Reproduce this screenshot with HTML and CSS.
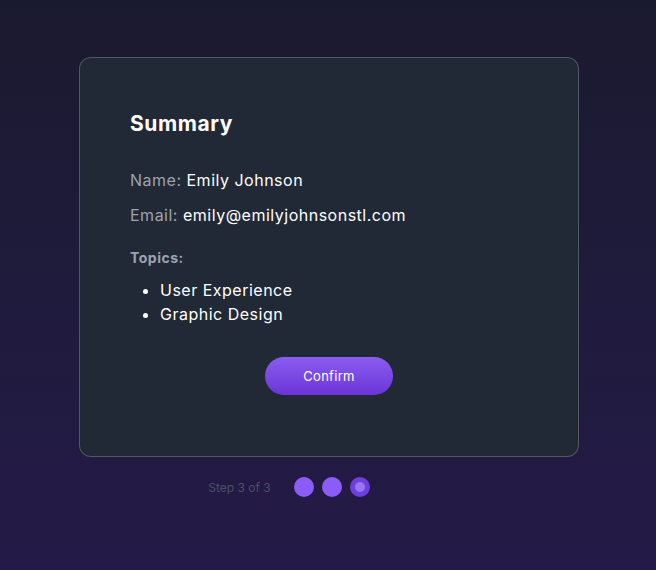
FILE: index.html
```html
<!DOCTYPE html>
<html lang="en">
<head>
<meta charset="utf-8">
<title>Summary</title>
<link rel="stylesheet" href="styles.css">
</head>
<body>
<main class="wrap">
  <section class="card">
    <h2 class="title">Summary</h2>
    <p class="field"><span class="label">Name:</span> Emily Johnson</p>
    <p class="field"><span class="label">Email:</span> emily@emilyjohnsonstl.com</p>
    <h3 class="topics-label">Topics:</h3>
    <ul class="topics">
      <li>User Experience</li>
      <li>Graphic Design</li>
    </ul>
    <div class="actions">
      <button class="confirm" type="button">Confirm</button>
    </div>
  </section>
  <div class="stepper">
    <span class="step-text">Step 3 of 3</span>
    <div class="dots">
      <span class="dot"></span>
      <span class="dot"></span>
      <span class="dot dot-active"></span>
    </div>
  </div>
</main>
</body>
</html>
```
FILE: styles.css
```css
* { box-sizing: border-box; }
html, body { margin: 0; height: 100%; }
body {
  background: linear-gradient(180deg, #1a1a2f 0%, #1f1b3c 50%, #241a48 100%);
  font-family: "Inter", "Open Sans", sans-serif;
  color: #ffffff;
}
.wrap {
  padding-top: 57px;
  padding-left: 2px;
  display: flex;
  flex-direction: column;
  align-items: center;
}
.card {
  width: 500px;
  height: 400px;
  background: #212936;
  border: 1px solid rgba(255,255,255,0.22);
  border-radius: 12px;
  padding: 50px 50px;
}
.title {
  margin: 0 0 28px;
  font-size: 21px;
  font-weight: 700;
  letter-spacing: 0.6px;
  line-height: 32px;
}
.field {
  margin: 0 0 11px;
  font-size: 16px;
  letter-spacing: 0.5px;
  line-height: 24px;
}
.label { color: #9ca3af; }
.topics-label {
  margin: 21px 0 10px;
  font-size: 14px;
  font-weight: 700;
  letter-spacing: 0.5px;
  color: #9ca3af;
  line-height: 20px;
}
.topics {
  margin: 0;
  padding-left: 30px;
  font-size: 16px;
  letter-spacing: 0.5px;
  line-height: 24px;
}
.actions {
  display: flex;
  justify-content: center;
  margin-top: 31px;
}
.confirm {
  width: 128px;
  height: 38px;
  border: none;
  border-radius: 19px;
  background: linear-gradient(180deg, #8a5cf2 0%, #6c35d6 100%);
  color: #fff;
  font-family: inherit;
  font-size: 13px;
  letter-spacing: 0.3px;
}
.stepper {
  display: flex;
  align-items: center;
  gap: 23px;
  margin-top: 20px;
  padding-right: 80px;
}
.step-text {
  font-size: 12px;
  letter-spacing: 0;
  color: #4b4f66;
}
.dots { display: flex; gap: 8px; }
.dot {
  width: 20px;
  height: 20px;
  border-radius: 50%;
  background: #8b5cf6;
}
.dot-active {
  background: #9b74f2;
  border: 5px solid #6d3fdc;
}
```
